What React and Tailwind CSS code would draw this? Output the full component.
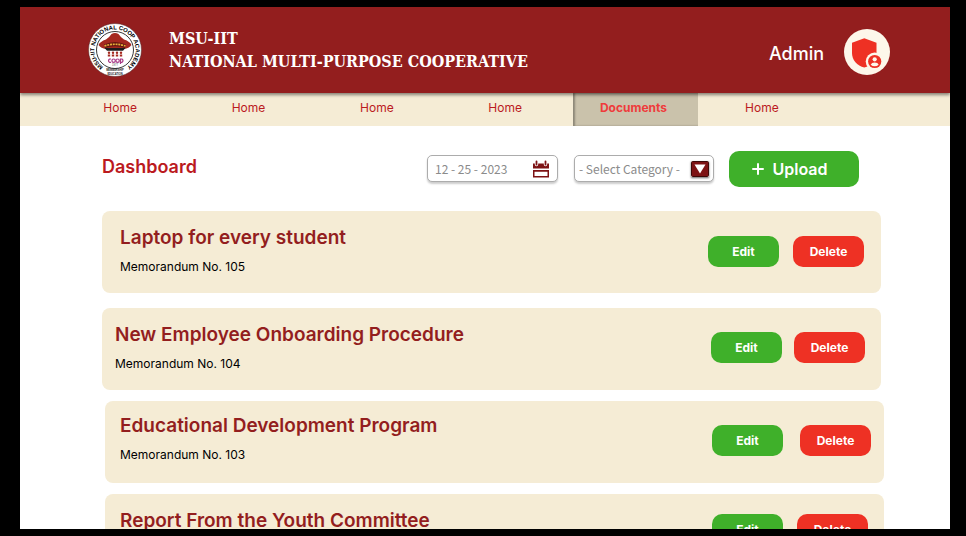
import React from "react";

const navItems = ["Home", "Home", "Home", "Home", "Documents", "Home"];

const memos = [
  {
    title: "Laptop for every student",
    number: "105",
    card: "mb-[15px] pt-4 pl-[18px] pr-[17px]",
    actions: "gap-3.5 pt-[9px]",
  },
  {
    title: "New Employee Onboarding Procedure",
    number: "104",
    card: "mb-[11px] pt-4 pl-[13px] pr-4",
    actions: "gap-3 pt-2",
  },
  {
    title: "Educational Development Program",
    number: "103",
    card: "mb-[11px] ml-[3px] -mr-[3px] pt-3.5 pl-[15px] pr-[13px]",
    actions: "gap-[17px] pt-2.5",
  },
  {
    title: "Report From the Youth Committee",
    number: "102",
    card: "ml-[3px] -mr-[3px] pt-4 pl-[15px] pr-4",
    actions: "gap-3.5 pt-1",
  },
];

function Seal() {
  return (
    <svg viewBox="0 0 54 54" className="size-[54px]" role="img" aria-label="MSU-IIT National Coop Academy">
      <defs>
        <path id="seal-ring" d="M14.400 43.300 A20.600 20.600 0 1 1 39.600 43.300" />
      </defs>
      <circle cx="27" cy="27" r="26.500" fill="#fff" stroke="#4a2020" strokeWidth="0.500" />
      <circle cx="27" cy="27" r="18.500" fill="#fff" stroke="#222" strokeWidth="0.900" />
      <text fontFamily="Liberation Sans, sans-serif" fontSize="5.900" fontWeight="700" fill="#000">
        <textPath href="#seal-ring" startOffset="50%" textAnchor="middle">
          MSU-IIT NATIONAL COOP ACADEMY
        </textPath>
      </text>
      <path d="M10.500 22 Q12 18.500 18 16.500 Q22 13.500 23.500 11 Q27 9 30.500 11 Q32 13.500 36 16.500 Q42 18.500 43.500 22 Q41 25.500 36 26 L18 26 Q13 25.500 10.500 22Z" fill="#a5281f" />
      <path d="M16 21.500 Q27 16.500 38 21.500 L37 25 Q27 21.500 17 25Z" fill="#651710" />
      <path d="M16.500 23 Q27 19.500 37.500 23" fill="none" stroke="#e8b13a" strokeWidth="1.700" strokeDasharray="2 0.800" />
      <path d="M16.500 25 H37.500 L35 27.800 H19Z" fill="#1c1c1c" />
      <g fill="#a5281f">
        <circle cx="21" cy="29.800" r="1.200" />
        <circle cx="25" cy="29.800" r="1.200" />
        <circle cx="29" cy="29.800" r="1.200" />
        <circle cx="33" cy="29.800" r="1.200" />
        <path d="M19.800 33.500 V31.500 H22.200 V33.500Z M23.800 33.500 V31.500 H26.200 V33.500Z M27.800 33.500 V31.500 H30.200 V33.500Z M31.800 33.500 V31.500 H34.200 V33.500Z" />
      </g>
      <g fill="none" stroke="#a83a86" strokeWidth="1.200">
        <path d="M23 36 H21.500 Q19.500 37.700 21.500 39.400 H23" />
        <circle cx="25.600" cy="37.700" r="1.700" />
        <circle cx="29.600" cy="37.700" r="1.700" />
        <path d="M32.500 41 V36 H34 Q36 37.700 34 39.400 H32.500" />
      </g>
      <text x="27" y="43" textAnchor="middle" fontFamily="Liberation Sans, sans-serif" fontSize="2.600" fill="#444">1977</text>
      <text x="27" y="48.300" textAnchor="middle" fontFamily="Liberation Sans, sans-serif" fontSize="2.600" fontWeight="700" fill="#222">MEMBERSHIP</text>
      <text x="27" y="52" textAnchor="middle" fontFamily="Liberation Sans, sans-serif" fontSize="2.600" fontWeight="700" fill="#222">EDUCATION</text>
    </svg>
  );
}

function AdminBadge() {
  return (
    <svg viewBox="0 0 46 46" className="size-[46px]" aria-hidden="true">
      <circle cx="23" cy="23" r="23" fill="#fdf7ea" />
      <path d="M20.300 9.200 L32.500 13.800 V24 C32.500 31 27 36.800 20.300 38.500 C13 36.800 8 31 8 24 V13.800Z" fill="#ee3124" />
      <circle cx="30.700" cy="32.500" r="9" fill="#fdf7ea" />
      <circle cx="30.700" cy="32.500" r="6.600" fill="#ee3124" />
      <circle cx="30.700" cy="30.300" r="2.100" fill="#fdf7ea" />
      <path d="M26.700 35.700 Q27.500 33.600 30.700 33.600 Q33.900 33.600 34.700 35.700 Q33 37.200 30.700 37.200 Q28.400 37.200 26.700 35.700Z" fill="#fdf7ea" />
    </svg>
  );
}

function CalendarIcon() {
  return (
    <svg viewBox="0 0 18 18" className="size-[18px]" aria-hidden="true">
      <path d="M1 3.500 H17 V8.500 H1Z M1 10 H17 V17.500 H1Z M2.500 11.800 V16 H15.500 V11.800Z" fill="#7d1214" fillRule="evenodd" />
      <path d="M4.500 2 V4.500 M13.500 2 V4.500" stroke="#fff" strokeWidth="3.400" strokeLinecap="round" />
      <path d="M4.500 1.300 V4.500 M13.500 1.300 V4.500" stroke="#7d1214" strokeWidth="1.800" strokeLinecap="round" />
    </svg>
  );
}

export default function App() {
  return (
    <div className="h-screen overflow-hidden bg-black pt-[7px] pr-4 pb-[7px] pl-5 font-['Inter',sans-serif]">
      <div className="flex h-full flex-col overflow-hidden bg-white">
        <header className="relative flex h-[86px] shrink-0 items-center bg-[#931e1e] pr-[60px] pl-[68px] text-white shadow-[0_2px_3px_rgba(0,0,0,0.45)]">
          <Seal />
          <h1 className="ml-[27px] font-['DejaVu_Serif_Condensed','DejaVu_Serif',serif] text-base leading-[23px] font-bold">
            MSU-IIT
            <br />
            NATIONAL MULTI-PURPOSE COOPERATIVE
          </h1>
          <div className="mt-1 ml-auto flex items-center gap-5">
            <span className="pt-1 text-lg font-medium">Admin</span>
            <a href="#profile" aria-label="Admin profile">
              <AdminBadge />
            </a>
          </div>
        </header>

        <nav className="grid h-[33px] shrink-0 grid-cols-6 gap-1 bg-[#f5ecd5] pr-[124px] pl-10 text-xs leading-[30px] text-[#bb1a1e]">
          {navItems.map((item, i) => (
            <a
              key={i}
              href="#nav"
              className={
                item === "Documents"
                  ? "bg-[#cac2ab] pr-1 text-center font-bold text-[#ef3b3b] shadow-[inset_2px_0_2px_rgba(0,0,0,0.3)]"
                  : "pr-1 text-center"
              }
            >
              {item}
            </a>
          ))}
        </nav>

        <main className="pr-[69px] pl-[82px]">
          <div className="flex h-[85px] items-center">
            <h2 className="pb-1 text-lg font-semibold text-[#bb1a1e]">Dashboard</h2>
            <div className="mr-[22px] ml-auto flex items-center gap-4 font-['Noto_Sans_CJK_SC',sans-serif] text-xs text-[#8b8b8b]">
              <div className="flex h-[27px] w-[131px] items-center rounded-[5px] border border-[#acacac] bg-white px-[7px] shadow-[0_2px_2px_rgba(0,0,0,0.2)]">
                <input aria-label="Date" defaultValue="12 - 25 - 2023" className="min-w-0 flex-1 outline-none" />
                <button aria-label="Open calendar">
                  <CalendarIcon />
                </button>
              </div>
              <div className="relative w-[140px]">
                <select
                  aria-label="Category"
                  className="block h-[27px] w-full appearance-none rounded-[5px] border border-[#acacac] bg-white pl-1 shadow-[0_2px_2px_rgba(0,0,0,0.2)] outline-none"
                >
                  <option>- Select Category -</option>
                </select>
                <span className="pointer-events-none absolute inset-y-0 right-[5px] flex items-center">
                  <svg viewBox="0 0 18 16" className="h-4 w-[18px] shadow-[0_1px_2px_rgba(0,0,0,0.6)]" aria-hidden="true">
                    <rect x="0.500" y="0.500" width="17" height="15" rx="1" fill="#7d1214" stroke="#3d0808" />
                    <path d="M3.500 3.500 H14.500 L9 12.500Z" fill="#fff" />
                  </svg>
                </span>
              </div>
              <button className="-ml-px flex h-9 w-[130px] items-center justify-center gap-2 rounded-[10px] bg-[#3fb02a] pr-2 font-['Inter',sans-serif] text-base font-semibold text-white">
                <svg viewBox="0 0 12 12" className="size-3" aria-hidden="true">
                  <path d="M6 1 V11 M1 6 H11" stroke="#fff" strokeWidth="2" strokeLinecap="round" />
                </svg>
                Upload
              </button>
            </div>
          </div>

          <ul>
            {memos.map((memo) => (
              <li
                key={memo.number}
                className={`flex h-[82px] items-start justify-between rounded-lg bg-[#f5ecd5] ${memo.card}`}
              >
                <div>
                  <h3 className="text-[19px] leading-[22px] font-semibold text-[#931e1e]">{memo.title}</h3>
                  <p className="mt-2.5 text-xs leading-4 text-black">Memorandum No. {memo.number}</p>
                </div>
                <div className={`flex text-xs font-bold text-white ${memo.actions}`}>
                  <button className="h-[31px] w-[71px] rounded-[10px] bg-[#3fb02a]">Edit</button>
                  <button className="h-[31px] w-[71px] rounded-[10px] bg-[#ee3124]">Delete</button>
                </div>
              </li>
            ))}
          </ul>
        </main>
      </div>
    </div>
  );
}
